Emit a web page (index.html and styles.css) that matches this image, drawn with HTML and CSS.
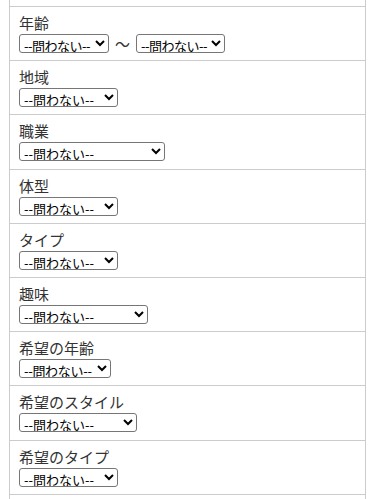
FILE: index.html
```html
<!DOCTYPE html>
<html lang="ja">
<head>
    <meta charset="UTF-8">
    <meta name="viewport" content="width=device-width, initial-scale=1.0">
    <title>検索条件</title>
    <link rel="stylesheet" href="styles.css">
</head>
<body>
    <div id="search">
        <div class="row top"></div>

        <div class="row">
            <div class="label">年齢</div>
            <div class="range">
                <select class="sel w-age"><option>--問わない--</option></select>
                <span class="tilde">～</span>
                <select class="sel w-age2"><option>--問わない--</option></select>
            </div>
        </div>

        <div class="row">
            <div class="label">地域</div>
            <select class="sel w-mid"><option>--問わない--</option></select>
        </div>

        <div class="row">
            <div class="label">職業</div>
            <select class="sel w-job"><option>--問わない--</option></select>
        </div>

        <div class="row">
            <div class="label">体型</div>
            <select class="sel w-mid"><option>--問わない--</option></select>
        </div>

        <div class="row">
            <div class="label">タイプ</div>
            <select class="sel w-mid"><option>--問わない--</option></select>
        </div>

        <div class="row">
            <div class="label">趣味</div>
            <select class="sel w-hobby"><option>--問わない--</option></select>
        </div>

        <div class="row">
            <div class="label">希望の年齢</div>
            <select class="sel w-wage"><option>--問わない--</option></select>
        </div>

        <div class="row">
            <div class="label">希望のスタイル</div>
            <select class="sel w-style"><option>--問わない--</option></select>
        </div>

        <div class="row">
            <div class="label">希望のタイプ</div>
            <select class="sel w-mid"><option>--問わない--</option></select>
        </div>

        <div class="row"></div>
    </div>
</body>
</html>
```

FILE: styles.css
```css
body {
    margin: 0;
    background: #fff;
    font-family: "Noto Sans CJK JP", "Noto Sans", sans-serif;
    color: #333;
}
#search {
    margin: 0 7px 0 9px;
    border-left: 1px solid #ccc;
    border-right: 1px solid #ccc;
}
.row {
    padding: 5px 9px 7px;
    border-bottom: 1px solid #ccc;
    height: 41.2px;
}
.row.top {
    padding: 0;
    height: 6px;
}
.label {
    font-size: 15px;
    line-height: 22px;
}
.range {
    display: flex;
    align-items: center;
}
.sel {
    display: block;
    font-family: "Noto Sans CJK JP", sans-serif;
    font-size: 13px;
    height: 19px;
    padding: 0;
    margin: 0;
    border: 1px solid #767676;
    border-radius: 3px;
    color: #000;
    background: #fff;
}
.tilde {
    font-size: 15px;
    line-height: 19px;
    margin: 0 6px;
}
.w-age { width: 90px; letter-spacing: -0.5px; }
.w-age2 { width: 89px; letter-spacing: -0.5px; }
.w-mid { width: 99px; }
.w-job { width: 146px; }
.w-hobby { width: 129px; }
.w-wage { width: 92px; letter-spacing: -0.3px; }
.w-style { width: 118px; }
```
